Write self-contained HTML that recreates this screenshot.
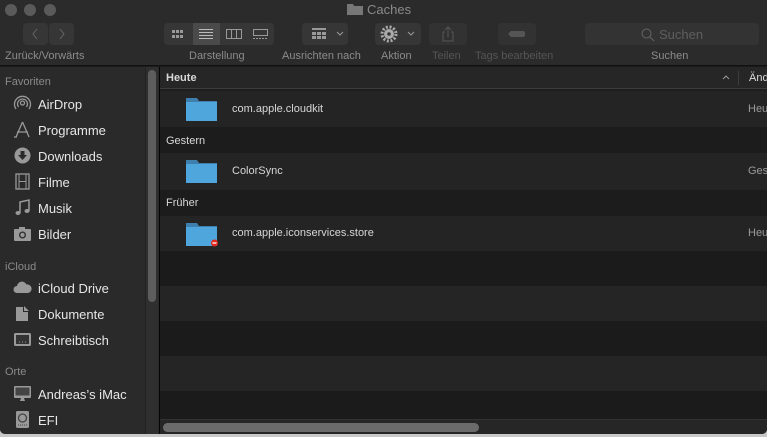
<!DOCTYPE html>
<html><head><meta charset="utf-8"><style>
*{margin:0;padding:0;box-sizing:border-box}
body{width:767px;height:437px;overflow:hidden;background:#c8c8c8;font-family:"Liberation Sans",sans-serif;position:relative}
.win{position:absolute;left:0;top:0;width:767px;height:434px;background:#1b1b1b;border-radius:0 0 5px 5px;overflow:hidden}
.tb{position:absolute;left:0;top:0;width:767px;height:66px;background:#2b2b2b;border-bottom:1px solid #111}
.dot{position:absolute;top:4px;width:12px;height:12px;border-radius:50%;background:#5a5a5a}
.title{position:absolute;left:346px;top:2px;color:#8a8a8a;font-size:13px}
.btn{position:absolute;top:23px;height:22px;background:#363636;border-radius:4px}
.lbl{position:absolute;top:50px;font-size:11px;color:#8c8c8c}
.side{position:absolute;left:0;top:67px;width:159px;height:367px;background:#2a2a2a}
.sh{position:absolute;left:5px;font-size:11px;color:#8a8a8a}
.si{position:absolute;left:38px;font-size:13px;color:#e6e6e6}
.ic{position:absolute;left:13px;width:19px;height:17px}
.vsb{position:absolute;left:145px;top:67px;width:13px;height:367px;background:#2f2f2f;border-left:1px solid #222}
.thumb{position:absolute;left:148px;top:70px;width:8px;height:232px;background:#5d5d5d;border-radius:4px}
.sep{position:absolute;left:159px;top:67px;width:1px;height:367px;background:#050505}
.c{position:absolute;left:160px;width:607px}
.gh{font-size:11px;color:#d8d8d8;font-weight:bold;padding-left:6px}
.fn{position:absolute;left:72px;font-size:11px;color:#d6d6d6}
.dt{position:absolute;left:588px;font-size:11px;color:#9a9a9a}
.fold{position:absolute;left:26px;width:31px;height:25px}
</style></head><body>
<div class="win">
<div class="tb">
<div class="dot" style="left:5px"></div><div class="dot" style="left:24px"></div><div class="dot" style="left:44px"></div>
<svg style="position:absolute;left:347px;top:3px" width="16" height="12"><path d="M0 1h6l1 2h9v9H0z" fill="#777"/></svg>
<div class="title" style="left:367px">Caches</div>
<div class="btn" style="left:23px;width:25px"></div><div class="btn" style="left:49px;width:25px"></div>
<svg style="position:absolute;left:23px;top:23px" width="51" height="22"><path d="M14 6l-4 5 4 5M37 6l4 5-4 5" stroke="#666" fill="none"/></svg>
<div class="lbl" style="left:5px">Zurück/Vorwärts</div>
<div class="btn" style="left:164px;width:110px"></div>
<div class="btn" style="left:193px;width:27px;background:#4a4a4a;border-radius:0"></div>
<svg style="position:absolute;left:164px;top:23px" width="110" height="22">
<g fill="#999"><rect x="8" y="7" width="3" height="3"/><rect x="12" y="7" width="3" height="3"/><rect x="16" y="7" width="3" height="3"/><rect x="8" y="12" width="3" height="3"/><rect x="12" y="12" width="3" height="3"/><rect x="16" y="12" width="3" height="3"/></g>
<g stroke="#bbb"><path d="M35 6.5h14M35 9.5h14M35 12.5h14M35 15.5h14"/></g>
<rect x="62.5" y="6.5" width="15" height="9" stroke="#999" fill="none"/><path d="M67.5 6.5v9M72.5 6.5v9" stroke="#999"/>
<rect x="89.5" y="6.5" width="14" height="6" stroke="#999" fill="none"/><path d="M89 15.5h15" stroke="#999" stroke-dasharray="2 1"/>
</svg>
<div class="lbl" style="left:189px">Darstellung</div>
<div class="btn" style="left:302px;width:46px"></div>
<svg style="position:absolute;left:302px;top:23px" width="46" height="22"><g fill="#999"><rect x="10" y="5" width="14" height="2"/><rect x="10" y="9" width="4" height="3"/><rect x="15" y="9" width="4" height="3"/><rect x="20" y="9" width="4" height="3"/><rect x="10" y="13" width="4" height="3"/><rect x="15" y="13" width="4" height="3"/><rect x="20" y="13" width="4" height="3"/></g><path d="M35 9l3 3 3-3" stroke="#999" fill="none"/></svg>
<div class="lbl" style="left:282px">Ausrichten nach</div>
<div class="btn" style="left:375px;width:46px"></div>
<svg style="position:absolute;left:375px;top:23px" width="46" height="22"><circle cx="14" cy="11" r="5" fill="#aaa"/><circle cx="14" cy="11" r="7" fill="none" stroke="#aaa" stroke-width="3" stroke-dasharray="2 1.7"/><circle cx="14" cy="11" r="1.8" fill="#363636"/><path d="M33 9l3 3 3-3" stroke="#999" fill="none"/></svg>
<div class="lbl" style="left:381px">Aktion</div>
<div class="btn" style="left:429px;width:38px;background:#323232"></div>
<svg style="position:absolute;left:429px;top:23px" width="38" height="22"><path d="M16 9h-2v9h10V9h-2M19 14V4M16 7l3-3 3 3" stroke="#555" fill="none"/></svg>
<div class="lbl" style="left:432px;color:#555">Teilen</div>
<div class="btn" style="left:498px;width:38px;background:#323232"></div>
<svg style="position:absolute;left:498px;top:23px" width="38" height="22"><path d="M13 8h12a2 2 0 0 1 2 2v2a2 2 0 0 1-2 2H13l-3-3z" fill="#555"/></svg>
<div class="lbl" style="left:475px;color:#555">Tags bearbeiten</div>
<div class="btn" style="left:585px;width:174px;background:#333"></div>
<svg style="position:absolute;left:641px;top:28px" width="14" height="14"><circle cx="5.5" cy="5.5" r="4.5" stroke="#666" fill="none"/><path d="M9 9l4 4" stroke="#666"/></svg>
<div style="position:absolute;left:659px;top:27px;font-size:13px;color:#5e5e5e">Suchen</div>
<div class="lbl" style="left:651px">Suchen</div>
</div>

<div class="side">
<div class="sh" style="top:9px">Favoriten</div>
<div class="sh" style="top:194px">iCloud</div>
<div class="sh" style="top:299px">Orte</div>
<div class="si" style="top:30px">AirDrop</div>
<div class="si" style="top:56px">Programme</div>
<div class="si" style="top:82px">Downloads</div>
<div class="si" style="top:108px">Filme</div>
<div class="si" style="top:134px">Musik</div>
<div class="si" style="top:160px">Bilder</div>
<div class="si" style="top:214px">iCloud Drive</div>
<div class="si" style="top:240px">Dokumente</div>
<div class="si" style="top:266px">Schreibtisch</div>
<div class="si" style="top:320px">Andreas’s iMac</div>
<div class="si" style="top:346px">EFI</div>
<svg class="ic" style="top:28px" viewBox="0 0 19 17"><g fill="none" stroke="#999" stroke-width="1.3"><circle cx="9.5" cy="8" r="2"/><path d="M5.5 12a5 5 0 1 1 8 0M3 14a8 8 0 1 1 13 0"/></g></svg>
<svg class="ic" style="top:54px" viewBox="0 0 19 17"><path d="M9.5 1L3 16M9.5 1L16 16M4 11h11M1 16h3" stroke="#999" stroke-width="1.3" fill="none"/></svg>
<svg class="ic" style="top:80px" viewBox="0 0 19 17"><circle cx="9.5" cy="8.5" r="8" fill="#999"/><path d="M7.5 4h4v4h2.5l-4.5 5-4.5-5h2.5z" fill="#2a2a2a"/></svg>
<svg class="ic" style="top:106px" viewBox="0 0 19 17"><rect x="3" y="1" width="13" height="15" fill="none" stroke="#999" stroke-width="1.3"/><path d="M6 1v15M13 1v15M6 8.5h7" stroke="#999"/></svg>
<svg class="ic" style="top:132px" viewBox="0 0 19 17"><path d="M7 14V3l9-2v11" stroke="#999" stroke-width="1.5" fill="none"/><ellipse cx="5" cy="14" rx="2.5" ry="2" fill="#999"/><ellipse cx="14" cy="12" rx="2.5" ry="2" fill="#999"/></svg>
<svg class="ic" style="top:158px" viewBox="0 0 19 17"><rect x="1" y="4" width="17" height="12" rx="1" fill="#999"/><rect x="6" y="2" width="6" height="3" fill="#999"/><circle cx="9.5" cy="10" r="3.5" fill="#2a2a2a"/><circle cx="9.5" cy="10" r="2.2" fill="#999"/></svg>
<svg class="ic" style="top:212px" viewBox="0 0 19 17"><path d="M4 14a3.5 3.5 0 0 1 0-7 5 5 0 0 1 9.5-1.5A4 4 0 0 1 15 14z" fill="#999"/></svg>
<svg class="ic" style="top:238px" viewBox="0 0 19 17"><path d="M3 2h7v5h5v9H3z" fill="#999"/><path d="M11 1l5 5h-5z" fill="#999"/></svg>
<svg class="ic" style="top:264px" viewBox="0 0 19 17"><rect x="1" y="2" width="17" height="13" rx="1.5" fill="#999"/><rect x="3" y="4" width="13" height="9" fill="#333"/><path d="M6 11h1M9 11h1M12 11h1" stroke="#999"/></svg>
<svg class="ic" style="top:318px" viewBox="0 0 19 17"><rect x="1" y="1" width="17" height="12" rx="1" fill="#999"/><rect x="2.5" y="2.5" width="14" height="8" fill="#444"/><path d="M7 16h5l-1-3H8z" fill="#999"/></svg>
<svg class="ic" style="top:344px" viewBox="0 0 19 17"><rect x="3" y="0" width="13" height="17" rx="1.5" fill="#999"/><circle cx="9.5" cy="7" r="4" fill="none" stroke="#444" stroke-width="1.3"/><path d="M5 14h9" stroke="#444" stroke-dasharray="1 1"/></svg>
</div>
<div class="vsb"></div><div class="thumb"></div><div class="sep"></div>

<div class="c" style="top:67px;height:22px;background:#262626;border-bottom:1px solid #3c3c3c"><div class="gh" style="line-height:22px">Heute</div>
<svg style="position:absolute;left:562px;top:8px" width="8" height="5"><path d="M1 4l3-3 3 3" stroke="#999" fill="none"/></svg>
<div style="position:absolute;left:578px;top:4px;width:1px;height:14px;background:#3c3c3c"></div>
<div style="position:absolute;left:589px;top:5px;font-size:11px;color:#ddd">Änd</div></div>
<div class="c" style="top:89px;height:2px;background:#1e1e1e"></div>
<div class="c" style="top:91px;height:36px;background:#242424"><div class="fn" style="top:12px">com.apple.cloudkit</div><div class="dt" style="top:12px">Heu</div>
<svg class="fold" style="top:5px" viewBox="0 0 31 25"><path d="M0 2h11l2 3h18v20H0z" fill="#3f7fae"/><path d="M0 6h31v19H0z" fill="#4fa6dc"/></svg></div>
<div class="c" style="top:127px;height:26px;background:#1c1c1c"><div class="gh" style="line-height:29px;font-weight:normal">Gestern</div></div>
<div class="c" style="top:153px;height:37px;background:#242424"><div class="fn" style="top:12px">ColorSync</div><div class="dt" style="top:12px">Ges</div>
<svg class="fold" style="top:5px" viewBox="0 0 31 25"><path d="M0 2h11l2 3h18v20H0z" fill="#3f7fae"/><path d="M0 6h31v19H0z" fill="#4fa6dc"/></svg></div>
<div class="c" style="top:190px;height:26px;background:#1c1c1c"><div class="gh" style="line-height:27px;font-weight:normal">Früher</div></div>
<div class="c" style="top:216px;height:35px;background:#242424"><div class="fn" style="top:11px">com.apple.iconservices.store</div><div class="dt" style="top:11px">Heu</div>
<svg class="fold" style="top:5px;width:34px;height:27px" viewBox="0 0 34 27"><path d="M0 2h11l2 3h18v20H0z" fill="#3f7fae"/><path d="M0 6h31v19H0z" fill="#4fa6dc"/><circle cx="28.5" cy="22" r="3.5" fill="#e0281e"/><path d="M26.5 22h4" stroke="#fff" stroke-width="1.3"/></svg></div>
<div class="c" style="top:251px;height:35px;background:#1b1b1b"></div>
<div class="c" style="top:286px;height:35px;background:#252525"></div>
<div class="c" style="top:321px;height:35px;background:#1b1b1b"></div>
<div class="c" style="top:356px;height:35px;background:#252525"></div>
<div class="c" style="top:391px;height:29px;background:#1b1b1b"></div>
<div class="c" style="top:419px;height:15px;background:#262626;border-top:1px solid #333"></div>
<div style="position:absolute;left:163px;top:423px;width:316px;height:9px;border-radius:5px;background:#6b6b6b"></div>
</div>
</body></html>
